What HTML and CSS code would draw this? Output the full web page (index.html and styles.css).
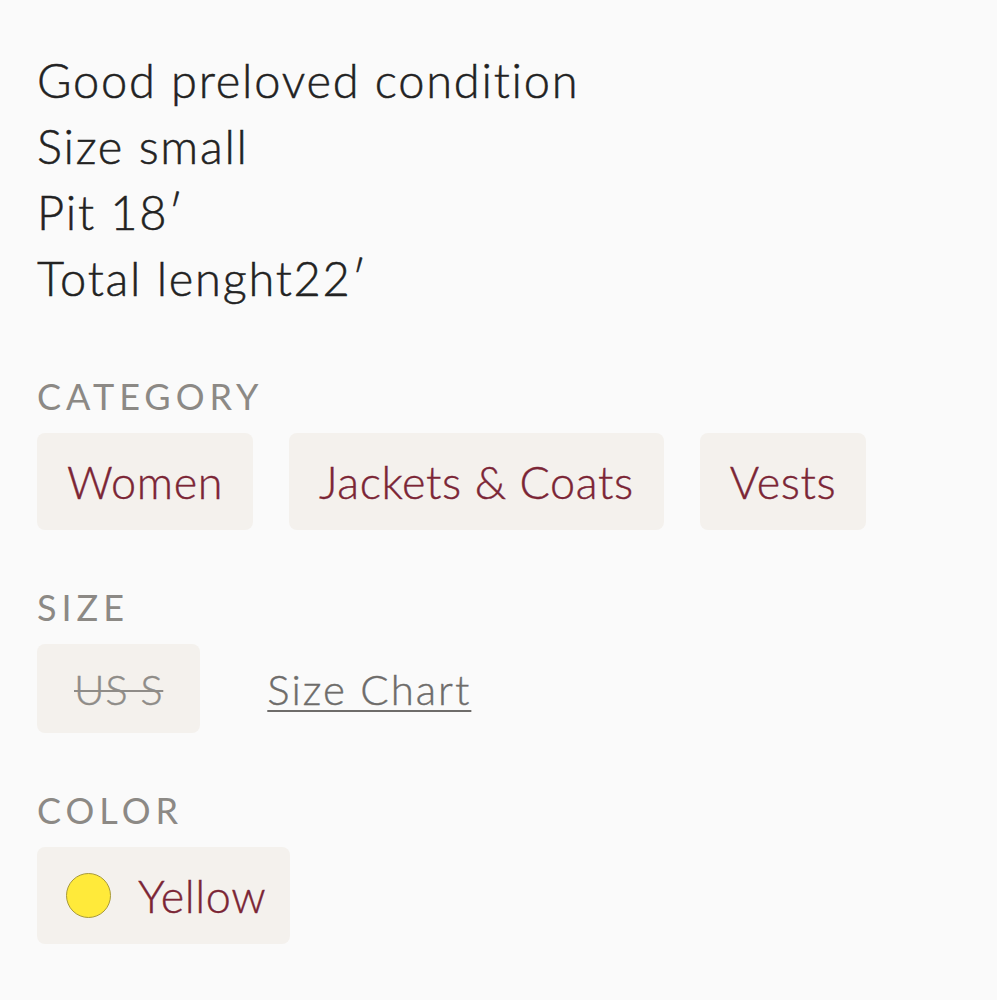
FILE: index.html
```html
<!DOCTYPE html>
<html lang="en">
<head>
    <meta charset="UTF-8">
    <meta name="viewport" content="width=device-width, initial-scale=1.0">
    <title>Listing details</title>
    <link rel="stylesheet" href="styles.css">
</head>
<body>
    <div class="details">
        <p class="description">Good preloved condition<br>Size small<br>Pit 18&prime;<br>Total lenght22&prime;</p>

        <h2 class="label label_first">CATEGORY</h2>
        <div class="chips">
            <a class="chip" href="#">Women</a>
            <a class="chip" href="#">Jackets &amp; Coats</a>
            <a class="chip" href="#">Vests</a>
        </div>

        <h2 class="label">SIZE</h2>
        <div class="chips">
            <span class="chip chip_size"><s>US S</s></span>
            <a class="size_chart" href="#">Size Chart</a>
        </div>

        <h2 class="label">COLOR</h2>
        <div class="chips">
            <a class="chip chip_color" href="#"><span class="swatch"></span>Yellow</a>
        </div>
    </div>
</body>
</html>
```

FILE: styles.css
```css
body
{
    margin: 0;
    background-color: #fafafa;
    font-family: Lato, "Open Sans", sans-serif;
}
.details
{
    padding: 47px 0 0 37px;
}
.description
{
    margin: 0;
    font-size: 47px;
    line-height: 66px;
    letter-spacing: 1.75px;
    font-weight: 300;
    -webkit-text-stroke: 0.5px #222222;
    color: #222222;
}
.label
{
    margin: 55px 0 15px 0;
    font-size: 36px;
    line-height: 44px;
    font-weight: normal;
    letter-spacing: 5px;
    color: #8c8985;
}
.label_first
{
    margin-top: 63px;
}
.chips
{
    display: flex;
    align-items: center;
    gap: 36px;
}
.chip
{
    display: inline-flex;
    align-items: center;
    height: 97px;
    padding: 0 30px;
    border-radius: 8px;
    background-color: #f4f1ed;
    color: #7b2535;
    font-size: 45px;
    font-weight: 300;
    letter-spacing: 0.6px;
    -webkit-text-stroke: 0.4px currentColor;
    text-decoration: none;
}
.chip_size
{
    height: 89px;
    padding: 0 37px;
    color: #8f8c88;
    font-size: 42px;
}
.chip_size s
{
    text-decoration-thickness: 2px;
}
.size_chart
{
    margin-left: 31px;
    font-size: 42px;
    font-weight: 300;
    letter-spacing: 2px;
    -webkit-text-stroke: 0.4px currentColor;
    color: #6e6c6a;
    text-decoration-thickness: 2px;
    text-underline-offset: 5px;
}
.chip_color
{
    padding: 0 24px 0 29px;
}
.swatch
{
    display: inline-block;
    width: 45px;
    height: 45px;
    margin-right: 27px;
    border-radius: 50%;
    background-color: #ffea3a;
    border: 1px solid #a89a3a;
    box-sizing: border-box;
}
```
